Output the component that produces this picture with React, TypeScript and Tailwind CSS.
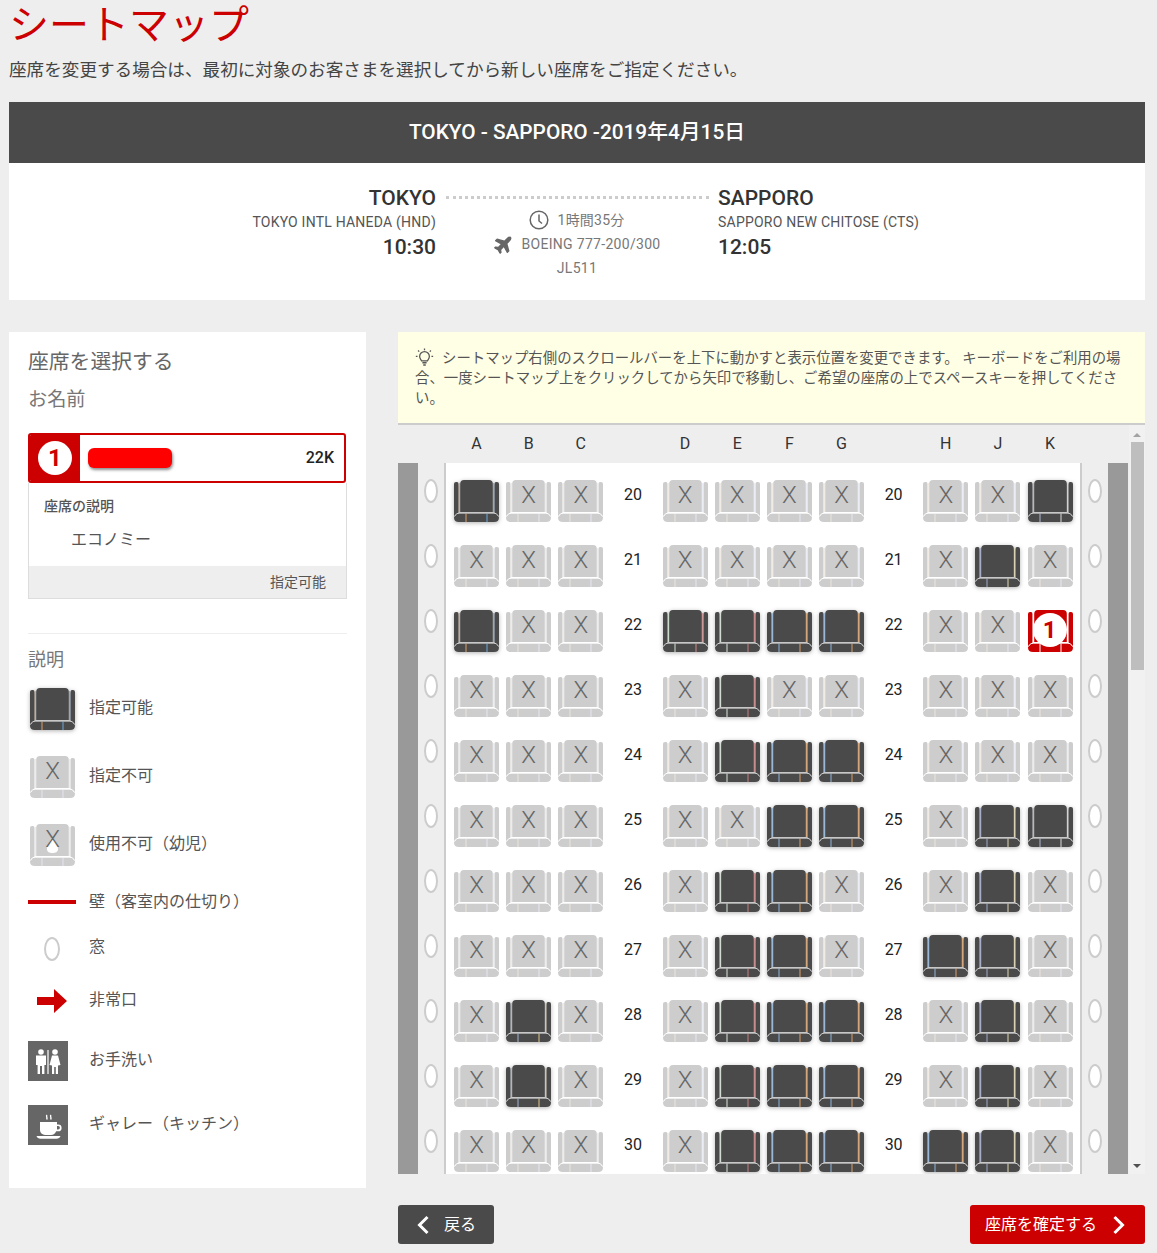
import { FaPlane } from "react-icons/fa";

type SeatKind = "open" | "taken" | "infant" | "picked";

const COLUMNS = ["A", "B", "C", "", "D", "E", "F", "G", "", "H", "J", "K"];

// o = open, x = taken, s = picked, a space is the row number column
const ROWS: [number, string][] = [
  [20, "oxx xxxx xxo"],
  [21, "xxx xxxx xox"],
  [22, "oxx oooo xxs"],
  [23, "xxx xoxx xxx"],
  [24, "xxx xooo xxx"],
  [25, "xxx xxoo xoo"],
  [26, "xxx xoox xox"],
  [27, "xxx xoox oox"],
  [28, "xox xooo xox"],
  [29, "xox xooo xox"],
  [30, "xxx xooo oox"],
];

// the fine coloured seams on the seats differ by column
const SEAMS: [string, string][] = [
  ["#d9a066", "#6fa8dc"],
  ["#9fb4d0", "#e0c48a"],
  ["#d9b98c", "#a9c4e4"],
  ["#ffffff", "#ffffff"],
  ["#cfe3cf", "#d08a8a"],
  ["#d8e4d8", "#c77f7f"],
  ["#8fb4dc", "#d9a066"],
  ["#8fb4dc", "#d9a066"],
  ["#ffffff", "#ffffff"],
  ["#8fb4dc", "#d9a066"],
  ["#9fa8c8", "#e0d8b0"],
  ["#a9b8d0", "#d8d8d8"],
];

function NumberBadge() {
  return (
    <span className="flex h-[34px] w-[34px] items-center justify-center rounded-full bg-white text-[24px] leading-none font-bold text-[#c00]">
      1
    </span>
  );
}

function SeatShape({ fill, seams, line }: { fill: string; seams: [string, string]; line: string }) {
  const [a, b] = seams;
  return (
    <svg width="45" height="42" viewBox="0 0 45 42" className="block">
      <path d="M0 4Q0 2 2 2H3Q4.500 2 4.500 4V32.500L0 36Z" fill={fill} />
      <path d="M45 4Q45 2 43 2H42Q40.500 2 40.500 4V32.500L45 36Z" fill={fill} />
      <path d="M6.200 4Q6.200 0 10 0H35Q38.800 0 38.800 4V32H6.200Z" fill={fill} />
      <path d="M5 33.500H40Q45 33.500 45 37.750T40 42H5Q0 42 0 37.750T5 33.500Z" fill={fill} />
      <path d="M5.350 3V32" stroke={a} strokeWidth="0.9" />
      <path d="M39.650 3V32" stroke={b} strokeWidth="0.9" />
      <path d="M12 33.500V42" stroke={a} strokeWidth="1" />
      <path d="M33 33.500V42" stroke={b} strokeWidth="1" />
      <path d="M.5 36.500Q2 33 5.500 32.900H39.500Q43 33 44.500 36.500" stroke={line} strokeWidth="1" fill="none" />
    </svg>
  );
}

function Seat({ kind, seams }: { kind: SeatKind; seams: [string, string] }) {
  if (kind === "open") {
    return (
      <div className="h-[42px] w-[45px] drop-shadow-[0_1px_2px_rgba(0,0,0,0.3)]">
        <SeatShape fill="#4a4a4a" seams={seams} line="#cfcfcf" />
      </div>
    );
  }
  if (kind === "picked") {
    return (
      <div className="relative h-[42px] w-[45px]">
        <SeatShape fill="#cc0000" seams={["#ffffff", "#ffffff"]} line="#ffffff" />
        <div className="absolute top-[3px] left-[5px]">
          <NumberBadge />
        </div>
      </div>
    );
  }
  return (
    <div className="relative h-[42px] w-[45px]">
      <SeatShape fill="#cdcdcd" seams={seams} line="#ffffff" />
      {kind === "infant" && (
        <svg width="45" height="42" viewBox="0 0 45 42" className="absolute top-0 left-0">
          <path d="M22.500 13c2 3 5.500 8 5.500 12 0 3-2.500 4-5.500 4s-5.500-1-5.500-4c0-4 3.500-9 5.500-12Z" fill="#fff" />
        </svg>
      )}
      <span className="absolute top-0 left-0 w-full text-center text-[24px] leading-[30px] font-light text-[#666]">
        X
      </span>
    </div>
  );
}

function Window() {
  return <div className="h-[24px] w-[14px] rounded-[50%] border-2 border-[#ccc] bg-white" />;
}

function WindowColumn() {
  return (
    <div className="flex w-[26px] flex-col bg-[#eee]">
      {ROWS.map(([row]) => (
        <div key={row} className="flex h-[65px] shrink-0 justify-center pt-[16px]">
          <Window />
        </div>
      ))}
    </div>
  );
}

function Bulb() {
  return (
    <svg width="19" height="19" viewBox="0 0 18 18" fill="none" stroke="#555" strokeWidth="1.200">
      <path d="M6.200 12.200C5.600 10.600 4.400 10 4.400 8a4.600 4.600 0 0 1 9.200 0c0 2-1.200 2.600-1.800 4.200Z" />
      <path d="M7 14h4M7.800 16h2.400" strokeWidth="1.400" />
      <path d="M9 .5v1.600M2.900 2.300 4 3.400M15.100 2.300 14 3.400M.8 8h1.600M15.600 8h1.600" />
    </svg>
  );
}

function Chevron({ dir }: { dir: "left" | "right" }) {
  return (
    <svg width="14" height="20" viewBox="0 0 14 20" fill="none" stroke="#fff" strokeWidth="3">
      <path d={dir === "left" ? "M11.500 2 3.500 10l8 8" : "M2.500 2l8 8-8 8"} />
    </svg>
  );
}

function LegendRow({
  icon,
  label,
  className,
  labelClass = "pb-[2px]",
}: {
  icon: React.ReactNode;
  label: string;
  className: string;
  labelClass?: string;
}) {
  return (
    <div className={`flex items-center ${className}`}>
      <div className="flex w-[61px] shrink-0 items-center">{icon}</div>
      <span className={`text-[16px] text-[#555] ${labelClass}`}>{label}</span>
    </div>
  );
}

function Sidebar() {
  return (
    <aside className="h-[856px] w-[357px] shrink-0 bg-white px-[19px] pt-[15px]">
      <h2 className="text-[20.800px] leading-[30px] text-[#666]">座席を選択する</h2>
      <p className="mt-[8px] text-[19.200px] leading-[30px] text-[#777]">お名前</p>

      <div className="mt-[18px] flex h-[50px] w-[318px] overflow-hidden rounded-[3px] border-2 border-[#c00]">
        <div className="flex w-[50px] items-center justify-center bg-[#c00]">
          <NumberBadge />
        </div>
        <div className="flex flex-1 items-center justify-between pr-[10px] pl-[8px]">
          <span className="h-[20px] w-[84px] rounded-[6px] bg-[#f00] shadow-[1px_2px_3px_rgba(0,0,0,0.45)]" />
          <span className="text-[16px] font-medium text-[#222]">22K</span>
        </div>
      </div>

      <div className="border border-t-0 border-[#ddd]">
        <div className="h-[83px] px-[15px] pt-[12px]">
          <p className="text-[14px] leading-[22px] font-medium text-[#555]">座席の説明</p>
          <p className="mt-[12px] pl-[27px] text-[16px] leading-[22px] text-[#555]">エコノミー</p>
        </div>
        <div className="flex h-[32px] items-center justify-end bg-[#eee] pr-[20px] text-[14px] text-[#555]">
          指定可能
        </div>
      </div>

      <div className="mt-[34px] border-t border-[#eee]" />
      <p className="mt-[12px] text-[18px] leading-[28px] text-[#777]">説明</p>

      <LegendRow className="mt-[13px] h-[43px]" label="指定可能" icon={<div className="ml-[2px]"><Seat kind="open" seams={SEAMS[0]} /></div>} />
      <LegendRow className="mt-[25px] h-[43px]" label="指定不可" icon={<div className="ml-[2px]"><Seat kind="taken" seams={["#e4e6f2", "#e4e6f2"]} /></div>} />
      <LegendRow className="mt-[25px] h-[43px]" label="使用不可（幼児）" icon={<div className="ml-[2px]"><Seat kind="infant" seams={["#e4e6f2", "#e4e6f2"]} /></div>} />
      <LegendRow className="mt-[24px] h-[24px]" labelClass="pb-0" label="壁（客室内の仕切り）" icon={<div className="h-[4px] w-[48px] bg-[#c00]" />} />
      <LegendRow className="mt-[23px] h-[24px]" labelClass="pb-[4px]" label="窓" icon={<div className="ml-[16px] h-[24px] w-[16px] rounded-[50%] border-2 border-[#ccc]" />} />
      <LegendRow
        className="mt-[28px] h-[24px]"
        label="非常口"
        icon={
          <svg width="30" height="24" viewBox="0 0 30 24" className="ml-[9px]">
            <path d="M0 8h17V0l13 12-13 12v-8H0Z" fill="#c00" />
          </svg>
        }
      />
      <LegendRow
        className="mt-[28px] h-[40px]"
        label="お手洗い"
        icon={
          <svg width="40" height="40" viewBox="0 0 40 40">
            <rect width="40" height="40" fill="#666" />
            <g fill="#fff">
              <circle cx="13" cy="11" r="2.800" />
              <path d="M8 14.500h10v9.500h-1.600v9H14v-8h-2v8H9.600v-9H8Z" />
              <rect x="19.400" y="9" width="1.200" height="24" />
              <circle cx="27" cy="11" r="2.800" />
              <path d="M24 14.500h6l2.500 9.500-2.500.5V33h-2.200v-7h-1.600v7H24v-8.500l-2.500-.5Z" />
            </g>
          </svg>
        }
      />
      <LegendRow
        className="mt-[24px] h-[40px]"
        label="ギャレー（キッチン）"
        icon={
          <svg width="40" height="40" viewBox="0 0 40 40">
            <rect width="40" height="40" fill="#666" />
            <g fill="#fff">
              <path d="M12 17h17v2.500h1.200a3.400 3.400 0 0 1 0 6.800h-2A6 6 0 0 1 23 30h-6a5 5 0 0 1-5-5Zm17 4v3.400h1.200a1.700 1.700 0 0 0 0-3.400Z" />
              <path d="M8.500 31h24c-.6 1.800-2 2.800-4 2.800h-16c-2 0-3.400-1-4-2.800Z" />
            </g>
            <path d="M19 10c-1.500 1.500 1 2.500-.4 4.500M23 10c-1.500 1.500 1 2.500-.4 4.500" stroke="#fff" strokeWidth="1.400" fill="none" />
          </svg>
        }
      />
    </aside>
  );
}

function SeatMap() {
  return (
    <div className="flex h-[749px]">
      <div className="w-[731px] overflow-hidden">
        <div className="grid h-[38px] grid-cols-[repeat(12,45px)] items-center gap-x-[7.150px] pl-[56px] text-[16px] text-[#333]">
          {COLUMNS.map((c, i) => (
            <span key={i} className="text-center">
              {c}
            </span>
          ))}
        </div>
        <div className="flex h-[711px] overflow-hidden">
          <div className="w-[20px] shrink-0 bg-[#999]" />
          <WindowColumn />
          <div className="w-[638px] shrink-0 border-x-2 border-[#ccc] bg-white pl-[8px]">
            {ROWS.map(([row, layout]) => (
              <div
                key={row}
                className="grid h-[65px] grid-cols-[repeat(12,45px)] gap-x-[7.150px] pt-[17px]"
              >
                {layout.split("").map((c, i) => {
                  if (c === " ") {
                    return (
                      <span key={i} className="text-center text-[16px] leading-[30px] text-[#222]">
                        {row}
                      </span>
                    );
                  }
                  return (
                    <Seat
                      key={i}
                      kind={c === "o" ? "open" : c === "s" ? "picked" : "taken"}
                      seams={c === "o" ? SEAMS[i] : ["#ece6de", "#e4e8f2"]}
                    />
                  );
                })}
              </div>
            ))}
          </div>
          <WindowColumn />
          <div className="w-[20px] shrink-0 bg-[#999]" />
        </div>
      </div>

      <div className="flex w-[16px] flex-col items-center bg-[#f1f1f1]">
        <svg width="10" height="6" viewBox="0 0 10 6" className="mt-[7px]">
          <path d="M5 1l4 4H1Z" fill="#a3a3a3" />
        </svg>
        <div className="mt-[4px] h-[228px] w-[13px] bg-[#bebebe]" />
        <div className="flex-1" />
        <svg width="10" height="6" viewBox="0 0 10 6" className="mb-[5px]">
          <path d="M1 1h8L5 5Z" fill="#505050" />
        </svg>
      </div>
    </div>
  );
}

function FlightCard() {
  return (
    <section>
      <div className="flex h-[61px] items-center justify-center bg-[#4a4a4a] text-[20.800px] font-medium text-white">
        TOKYO - SAPPORO -2019年4月15日
      </div>
      <div className="grid h-[137px] grid-cols-[1fr_263px_1fr] gap-x-[9.500px] bg-white pt-[21px] text-[#333]">
        <div className="text-right">
          <p className="text-[21px] leading-[28px] font-medium">TOKYO</p>
          <p className="text-[14px] leading-[20px] tracking-[0.22px] text-[#555]">TOKYO INTL HANEDA (HND)</p>
          <p className="mt-[1px] text-[21px] leading-[28px] font-medium">10:30</p>
        </div>
        <div className="text-[14px] text-[#777]">
          <div className="mt-[12px] border-t-[3px] border-dotted border-[#ccc]" />
          <div className="mt-[11px] flex h-[20px] items-center justify-center gap-[9px] pr-[1px] tracking-[0.2px]">
            <svg width="20" height="20" viewBox="0 0 20 20" fill="none" stroke="#666" strokeWidth="1.500">
              <circle cx="10" cy="10" r="8.800" />
              <path d="M10 4.500V11l3 2.500" />
            </svg>
            <span>1時間35分</span>
          </div>
          <div className="mt-[3px] flex h-[22px] items-center justify-center gap-[8px] tracking-[0.3px]">
            <FaPlane className="-rotate-45 text-[20px] text-[#666]" />
            <span>BOEING 777-200/300</span>
          </div>
          <p className="mt-[2px] text-center leading-[22px] tracking-[0.3px]">JL511</p>
        </div>
        <div>
          <p className="text-[21px] leading-[28px] font-medium">SAPPORO</p>
          <p className="text-[14px] leading-[20px] tracking-[0.22px] text-[#555]">SAPPORO NEW CHITOSE (CTS)</p>
          <p className="mt-[1px] text-[21px] leading-[28px] font-medium">12:05</p>
        </div>
      </div>
    </section>
  );
}

export default function App() {
  return (
    <div className="min-h-[1253px] overflow-hidden bg-[#eee] pr-[12px] pl-[9px] font-[Roboto,'Noto_Sans_CJK_JP',sans-serif]">
      <h1 className="h-[49px] pt-[2px] text-[40px] leading-[47px] font-normal text-[#c00]">シートマップ</h1>
      <p className="mt-[8px] mb-[19px] text-[17.600px] leading-[26px] text-[#444]">
        座席を変更する場合は、最初に対象のお客さまを選択してから新しい座席をご指定ください。
      </p>

      <FlightCard />

      <div className="mt-[32px] flex gap-[32px]">
        <Sidebar />
        <div className="w-[747px]">
          <div className="h-[93px] border-b-2 border-[#ccc] bg-[#ffffe5] pt-[16px] pl-[17px] text-[14.400px] leading-[20px] text-[#555]">
            <p className="w-[712px]">
              <span className="mr-[8px] inline-block w-[19px] align-[-4px]">
                <Bulb />
              </span>
              シートマップ右側のスクロールバーを上下に動かすと表示位置を変更できます。 キーボードをご利用の場合、一度シートマップ上をクリックしてから矢印で移動し、ご希望の座席の上でスペースキーを押してください。
            </p>
          </div>
          <SeatMap />
          <div className="mt-[31px] flex justify-between">
            <button type="button" className="flex h-[39px] w-[96px] items-center gap-[14px] rounded-[3px] bg-[#4a4a4a] pl-[18px] text-[16px] text-white">
              <Chevron dir="left" />
              戻る
            </button>
            <button type="button" className="flex h-[39px] w-[175px] items-center gap-[15px] rounded-[3px] bg-[#c00] pl-[15px] text-[16px] text-white">
              座席を確定する
              <Chevron dir="right" />
            </button>
          </div>
        </div>
      </div>
    </div>
  );
}
